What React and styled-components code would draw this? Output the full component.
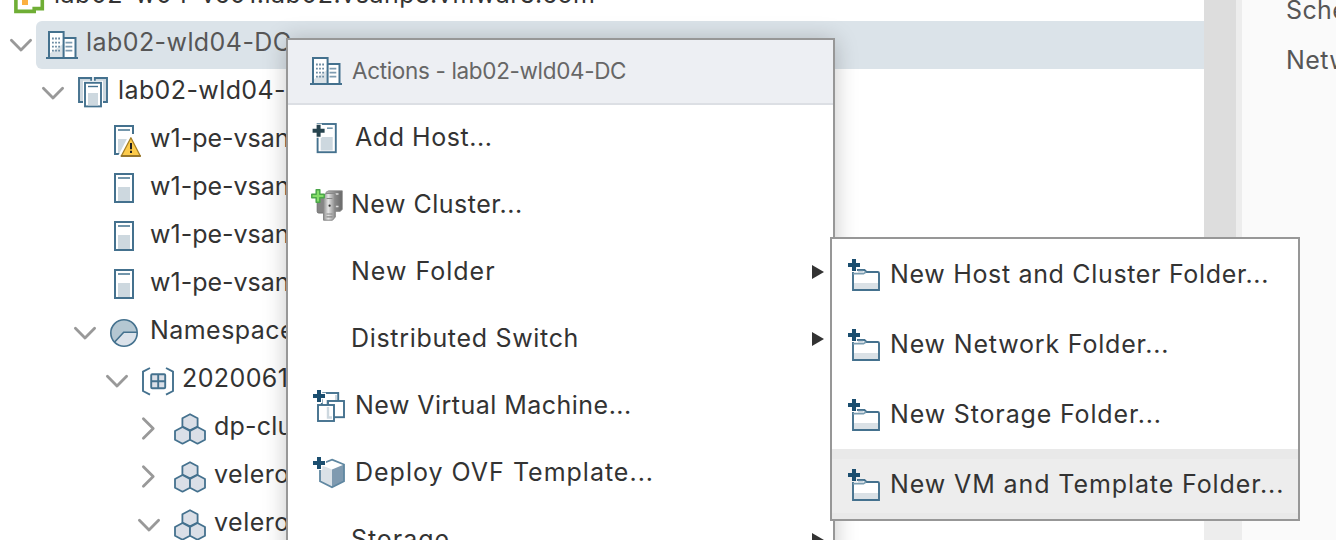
import React from "react";
import styled, { createGlobalStyle, css } from "styled-components";

const GlobalStyle = createGlobalStyle`
  *, *::before, *::after { box-sizing: border-box; }
  html, body { margin: 0; padding: 0; overflow: hidden; background: #fff; }
  body { font-family: Inter, "Liberation Sans", sans-serif; font-size: 25px; color: #333; }
`;

const line = "#44718e";
const pale = "#cdd8df";

/* ---------- layout ---------- */

const Screen = styled.div`
  position: relative;
  display: flex;
  width: 1336px;
  height: 540px;
  overflow: hidden;
`;

const TreePane = styled.div`
  flex: 0 0 1204px;
  overflow: hidden;
  background: #fff;
`;

const TreeList = styled.div`
  display: flex;
  flex-direction: column;
  margin-top: -27px;
`;

const Gutter = styled.div`
  display: flex;
  flex: 0 0 38px;
  height: 540px;
  background: #ededed;
`;

const Thumb = styled.div`
  width: 32px;
  height: 500px;
  background: #ddd;
`;

const DetailPane = styled.div`
  flex: 1;
  min-width: 0;
  padding-left: 44px;
  background: #fafafa;
  color: #565656;
  overflow: hidden;
`;

const DetailLabel = styled.div`
  height: 50px;
  line-height: 50px;
  margin-top: ${(p) => (p.$first ? "-15px" : 0)};
  letter-spacing: 0.4px;
  white-space: nowrap;
`;

/* ---------- tree ---------- */

const Row = styled.div`
  display: flex;
  height: 48px;
  flex: none;
  margin-left: ${(p) => p.$level * 32}px;
`;

const CaretBox = styled.div`
  display: flex;
  align-items: center;
  flex: 0 0 36px;
  padding-left: 9px;
`;

const RowBody = styled.div`
  display: flex;
  flex: 1;
  align-items: center;
  gap: 8px;
  padding-left: 10px;
  ${(p) =>
    p.$selected &&
    css`
      background: #dbe3e9;
      border-radius: 6px 0 0 6px;
      color: #565656;
    `}
`;

const RowLabel = styled.span`
  line-height: 42px;
  padding-bottom: 6px;
  white-space: nowrap;
  letter-spacing: ${(p) => p.$track || 0}px;
`;

/* ---------- menus ---------- */

const Menu = styled.div`
  position: absolute;
  left: 286px;
  top: 38px;
  width: 549px;
  height: 560px;
  border: 2px solid #979797;
  background: #fff;
  box-shadow: 0 2px 22px rgba(0, 0, 0, 0.22);
`;

const MenuHeader = styled.div`
  display: flex;
  align-items: center;
  gap: 8px;
  height: 65px;
  padding: 0 0 2px 22px;
  background: #edeff3;
  border-bottom: 2px solid #dcdfe4;
  font-size: 22.5px;
  color: #666;
`;

const MenuRow = styled.div`
  display: flex;
  align-items: center;
  height: 67px;
  padding: 0 9px 0 ${(p) => p.$inset}px;
`;

const MenuLabel = styled.span`
  flex: 1;
  padding-left: ${(p) => p.$gap}px;
  padding-bottom: ${(p) => (p.$title ? 1 : 3)}px;
  white-space: nowrap;
  letter-spacing: ${(p) => p.$track || 0}px;
`;

const IconSlot = styled.span`
  display: flex;
  flex: 0 0 32px;
  height: 32px;
  margin-top: ${(p) => p.$shift || 0}px;
`;

const SubMenu = styled.div`
  position: absolute;
  left: 830px;
  top: 237px;
  width: 470px;
  height: 284px;
  border: 2px solid #979797;
  background: #fff;
`;

const SubRow = styled.div`
  display: flex;
  align-items: center;
  height: 70px;
  padding: 2px 0 0 16px;
  ${(p) =>
    p.$active &&
    css`
      background: #ededed;
      border-top: 10px solid #e9e9e9;
      border-bottom: 6px solid #e9e9e9;
      padding-top: 0;
      padding-bottom: 2px;
    `}
`;

/* ---------- icons ---------- */

const Glyph = styled.svg`
  display: block;
  flex: none;
  overflow: visible;
`;

const ArrowGlyph = styled(Glyph)`
  margin-bottom: 2px;
`;

const Icon = ({ children }) => (
  <Glyph width="32" height="32" viewBox="0 0 32 32" fill="none">
    {children}
  </Glyph>
);

const Caret = ({ open }) => (
  <Glyph width="24" height="24" viewBox="0 0 24 24" fill="none" stroke="#999" strokeWidth="2.8" strokeLinecap="round" strokeLinejoin="round">
    <path d={open ? "M2.4 7.3 12 17 21.6 7.3" : "M6.4 1.7 16.2 11.5 6.4 21.3"} />
  </Glyph>
);

const Arrow = () => (
  <ArrowGlyph width="12" height="14" viewBox="0 0 12 14">
    <path d="M0 0 12 7 0 14Z" fill="#333" />
  </ArrowGlyph>
);

const Plus = ({ x = 6, y = 6, color = "#1b4e6f" }) => (
  <g>
    <path d={`M${x} ${y - 7}v14M${x - 7} ${y}h14`} stroke="#fff" strokeWidth="6.5" />
    <path d={`M${x} ${y - 6}v12M${x - 6} ${y}h12`} stroke={color} strokeWidth="4" />
  </g>
);

const VCenterIcon = () => (
  <Icon>
    <path d="M1.9 14V30.4H20.2V27.6H28.3V12" stroke="#6fae35" strokeWidth="3.6" />
    <rect x="8" y="14" width="6" height="10" fill="#fbb040" />
  </Icon>
);

const DatacenterIcon = () => (
  <Icon>
    <rect x="3" y="3" width="14.5" height="26" fill="#fff" />
    <path d="M3 29V25L17 15V29Z" fill={pale} opacity=".75" />
    <rect x="17.5" y="9" width="12" height="20" fill="#fff" />
    <path d="M3 29V3H17.6V29M17.6 9H29.5V29" stroke={line} strokeWidth="2" />
    <path d="M0 29H32" stroke={line} strokeWidth="2" />
    <path d="M6 9.5H15.2M6 13.7H15.2M6 17.7H15.2M6 21.7H15.2" stroke="#6b8ba2" strokeWidth="1.8" strokeDasharray="1.8 1.3" />
    <path d="M19.5 13.7H26.3M19.5 17.7H26.3M19.5 21.7H26.3" stroke="#7e9cb1" strokeWidth="1.8" />
  </Icon>
);

const ClusterIcon = () => (
  <Icon>
    <path d="M13 5V1H1V25H6" fill={pale} />
    <path d="M17 5V1H29V25H24" fill={pale} />
    <path d="M13.2 5V1H1V25H6M16.8 5V1H29V25H24" stroke={line} strokeWidth="1.9" />
    <rect x="5" y="3.8" width="20" height="27" fill="#fff" />
    <rect x="7" y="5.8" width="16" height="23.6" fill="#fff" stroke={line} strokeWidth="1.9" />
    <path d="M10 9.5H20" stroke={line} strokeWidth="1.4" />
    <rect x="10" y="16" width="10" height="12.4" fill={pale} />
  </Icon>
);

const HostBody = () => (
  <g>
    <rect x="5" y="1" width="18" height="28" fill="#fff" stroke={line} strokeWidth="2" />
    <path d="M8 5H20" stroke="#7396ab" strokeWidth="2" />
    <rect x="8" y="14" width="12" height="14" fill={pale} />
  </g>
);

const HostIcon = () => (
  <Icon>
    <HostBody />
  </Icon>
);

const HostWarnIcon = () => (
  <Icon>
    <HostBody />
    <path d="M19.5 9H26V31H8Z" fill="#fff" />
    <path d="M20.9 12.8 30.3 31H11.3Z" fill="#fdcb4b" stroke="#a57f25" strokeWidth="1.3" strokeLinejoin="round" />
    <path d="M10.8 31H30.8" stroke="#94732a" strokeWidth="1.8" />
    <path d="M21 18V24.2M21 25.8V28" stroke="#222" strokeWidth="2" />
  </Icon>
);

const NamespacesIcon = () => (
  <Icon>
    <circle cx="14" cy="16" r="13.2" fill="#b4c7d2" />
    <path d="M13.7 15.3H27.2A13.2 13.2 0 0 1 4.7 25.2Z" fill="#dbe2ea" />
    <circle cx="14" cy="16" r="13.2" stroke={line} strokeWidth="1.6" />
    <path d="M27 15.3H13.7L4.7 25" stroke={line} strokeWidth="1.6" />
  </Icon>
);

const NamespaceIcon = () => (
  <Icon>
    <path d="M8 3 1 6.6V26L8 29.6M24 3 31 6.6V26L24 29.6" stroke={line} strokeWidth="1.9" />
    <rect x="9.2" y="9.2" width="14" height="14" rx="1" fill="#dbe0e8" stroke={line} strokeWidth="1.9" />
    <path d="M16.2 9V23.5M9 16.2H23.5" stroke={line} strokeWidth="1.9" />
  </Icon>
);

const HexIcon = () => (
  <Icon>
    <g fill="#dadfe7" stroke={line} strokeWidth="1.8" strokeLinejoin="round">
      <path d="M16 1.2 23.6 5.2V13.6L16 17.4 8.4 13.6V5.2Z" />
      <path d="M8.5 14 16 18V26.8L8.5 30.7 1 26.8V18Z" />
      <path d="M23.5 14 31 18V26.8L23.5 30.7 16 26.8V18Z" />
    </g>
  </Icon>
);

const AddHostIcon = () => (
  <Icon>
    <rect x="5.6" y="2" width="18.2" height="28.2" fill="#fff" stroke={line} strokeWidth="1.9" />
    <path d="M15 6.2H20.7" stroke="#7396ab" strokeWidth="1.6" />
    <rect x="8.7" y="15" width="12" height="13.5" fill={pale} />
    <Plus x={6.6} y={8.8} color="#27444f" />
  </Icon>
);

const NewClusterIcon = () => (
  <Icon>
    <defs>
      <linearGradient id="steel" x1="0" x2="1" y1="0" y2="0">
        <stop offset="0" stopColor="#8b8b8b" />
        <stop offset=".4" stopColor="#e6e6e6" />
        <stop offset="1" stopColor="#858585" />
      </linearGradient>
      <linearGradient id="shade" x1="0" x2="1" y1="0" y2="0">
        <stop offset="0" stopColor="#b5b5b5" />
        <stop offset="1" stopColor="#676767" />
      </linearGradient>
    </defs>
    <rect x="6.2" y="8" width="8" height="16" rx="1.5" fill="#858585" stroke="#6f6f6f" />
    <path d="M15 3.2 17.5 1.8H31.3V20.5L29 22.4H20V5H15Z" fill="url(#shade)" stroke="#8a8a8a" strokeWidth=".8" />
    <path d="M23.5 5H27.5M23.5 17.5H27.5" stroke="#ddd" strokeWidth="1.5" />
    <path d="M12.5 6.5 15 4.5H24.3V28L21.5 31.2H12.5Z" fill="url(#steel)" stroke="#888" strokeWidth="1" />
    <path d="M15.5 9.5H21.5M15.5 25H21.5M15.5 27.8H21.5" stroke="#888" strokeWidth="1.2" />
    <circle cx="18.6" cy="16.7" r="1.1" fill="#333" />
    <path d="M5.2.8H8.8V5.2H13.2V8.8H8.8V13.2H5.2V8.8H.8V5.2H5.2Z" fill="#84dd68" stroke="#4ba64a" strokeWidth="1.5" strokeLinejoin="round" />
  </Icon>
);

const NewVmIcon = () => (
  <Icon>
    <rect x="8.8" y="3" width="16.4" height="16" fill="#fff" stroke={line} strokeWidth="1.9" />
    <path d="M23 5V11H14V17" stroke={pale} strokeWidth="2" />
    <rect x="15" y="11" width="16" height="16.2" fill="#fff" stroke={line} strokeWidth="1.9" />
    <rect x="5" y="15" width="16" height="16" fill="#fff" stroke={line} strokeWidth="1.9" />
    <path d="M15 17V27.5H19" stroke={pale} strokeWidth="2.4" />
    <Plus />
  </Icon>
);

const OvfIcon = () => (
  <Icon>
    <path d="M19 2.5 31 7.4 19 12.4 7 7.4Z" fill="#fff" />
    <path d="M7 7.4 19 12.4V30L7 24.3Z" fill="#dae1e7" />
    <path d="M31 7.4 19 12.4V30L31 24.3Z" fill="#7f9ab0" />
    <path d="M19 2.6 31 7.5V24.3L19 30.2 7 24.3V7.5Z" stroke="#5f87a1" strokeWidth="1.8" />
    <Plus />
  </Icon>
);

const FolderIcon = ({ bg }) => (
  <Icon>
    <path d="M5 11H16.5L18.5 13H31V31H5Z" fill="#fff" />
    <rect x="5" y="24" width="26" height="7" fill="#dae1e6" />
    <path d="M5 11H16.5L18.5 13H29.8Q31 13 31 14.2V31H5Z" stroke={line} strokeWidth="1.9" />
    <path d="M5 14.6H15.5L18 13" stroke="#7b9db1" strokeWidth="1.6" />
    <path d="M6 0V13M0 6H12" stroke={bg} strokeWidth="6" />
    <path d="M6 0V12M0 6H12" stroke="#1b4e6f" strokeWidth="4" />
    <path d="M10 12.8H15.5" stroke="#c8d5de" strokeWidth="2" />
  </Icon>
);

/* ---------- content ---------- */

const nodes = [
  { level: -1, icon: VCenterIcon, text: "lab02-w04-vc01.lab02.vsanpe.vmware.com", track: 0.51 },
  { level: 0, caret: "open", icon: DatacenterIcon, text: "lab02-wld04-DC", selected: true, track: 0.43 },
  { level: 1, caret: "open", icon: ClusterIcon, text: "lab02-wld04-Cluster", track: 0.4 },
  { level: 2, icon: HostWarnIcon, text: "w1-pe-vsan" },
  { level: 2, icon: HostIcon, text: "w1-pe-vsan" },
  { level: 2, icon: HostIcon, text: "w1-pe-vsan" },
  { level: 2, icon: HostIcon, text: "w1-pe-vsan" },
  { level: 2, caret: "open", icon: NamespacesIcon, text: "Namespaces", track: 0.45 },
  { level: 3, caret: "open", icon: NamespaceIcon, text: "2020061", track: 0.4 },
  { level: 4, caret: "closed", icon: HexIcon, text: "dp-clus", track: 0.2 },
  { level: 4, caret: "closed", icon: HexIcon, text: "velero", track: 0.5 },
  { level: 4, caret: "open", icon: HexIcon, text: "velero", track: 0.5 },
];

const actions = [
  { icon: AddHostIcon, text: "Add Host...", inset: 24, gap: 11, track: 0.55 },
  { icon: NewClusterIcon, text: "New Cluster...", inset: 23, gap: 8, track: 0.5 },
  { text: "New Folder", more: true, track: 1 },
  { text: "Distributed Switch", more: true, track: 0.68 },
  { icon: NewVmIcon, text: "New Virtual Machine...", inset: 25, gap: 10, track: 0.47 },
  { icon: OvfIcon, text: "Deploy OVF Template...", inset: 25, gap: 10, track: 1 },
  { text: "Storage", more: true, track: 0.95 },
];

const folders = [
  { text: "New Host and Cluster Folder...", track: 0.67 },
  { text: "New Network Folder...", track: 0.82 },
  { text: "New Storage Folder...", track: 0.85 },
  { text: "New VM and Template Folder...", active: true, track: 0.9 },
];

export default function App() {
  return (
    <>
      <GlobalStyle />
      <Screen>
        <TreePane>
          <TreeList>
            {nodes.map((n, i) => (
              <Row key={i} $level={n.level}>
                <CaretBox>{n.caret && <Caret open={n.caret === "open"} />}</CaretBox>
                <RowBody $selected={n.selected}>
                  <n.icon />
                  <RowLabel $track={n.track}>{n.text}</RowLabel>
                </RowBody>
              </Row>
            ))}
          </TreeList>
        </TreePane>
        <Gutter>
          <Thumb />
        </Gutter>
        <DetailPane>
          <DetailLabel $first>Scheduled Tasks</DetailLabel>
          <DetailLabel>Networks</DetailLabel>
        </DetailPane>

        <Menu>
          <MenuHeader>
            <DatacenterIcon />
            <MenuLabel $gap={2} $title $track={-0.34}>Actions - lab02-wld04-DC</MenuLabel>
          </MenuHeader>
          {actions.map((a) => (
            <MenuRow key={a.text} $inset={a.icon ? a.inset : 63}>
              {a.icon && (
                <IconSlot $shift={-2}>
                  <a.icon />
                </IconSlot>
              )}
              <MenuLabel $gap={a.icon ? a.gap : 0} $track={a.track}>{a.text}</MenuLabel>
              {a.more && <Arrow />}
            </MenuRow>
          ))}
        </Menu>

        <SubMenu>
          {folders.map((f) => (
            <SubRow key={f.text} $active={f.active}>
              <FolderIcon bg={f.active ? "#ededed" : "#fff"} />
              <MenuLabel $gap={10} $track={f.track}>{f.text}</MenuLabel>
            </SubRow>
          ))}
        </SubMenu>
      </Screen>
    </>
  );
}
